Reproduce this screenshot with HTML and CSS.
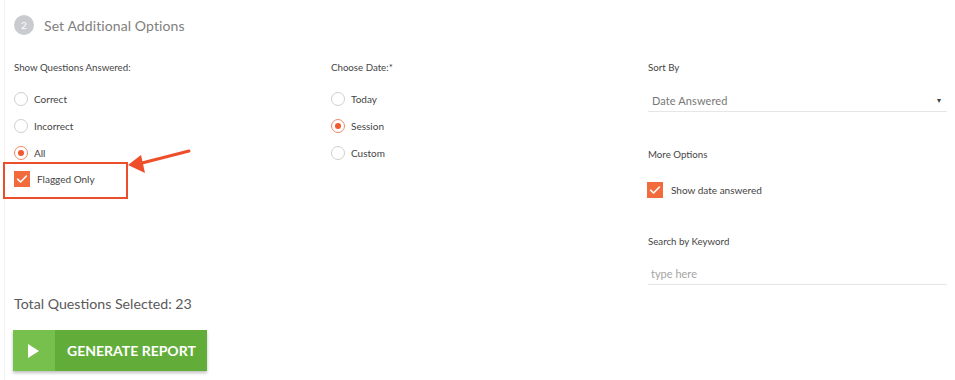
FILE: index.html
```html
<!DOCTYPE html>
<html>
<head>
<meta charset="utf-8">
<link rel="stylesheet" href="styles.css">
</head>
<body>
<div class="page">
  <div class="step">
    <span class="step-num">2</span>
    <span class="step-title">Set Additional Options</span>
  </div>

  <div class="grid">
    <div class="col">
      <div class="label">Show Questions Answered:</div>
      <div class="options">
        <div class="radio-row"><span class="radio"></span><span class="opt">Correct</span></div>
        <div class="radio-row"><span class="radio"></span><span class="opt">Incorrect</span></div>
        <div class="radio-row"><span class="radio checked"></span><span class="opt">All</span></div>
        <div class="check-row flagged">
          <span class="checkbox"><svg width="16" height="16" viewBox="0 0 16 16"><path d="M3.6 8.2 L6.6 11 L12.4 5" fill="none" stroke="#fff" stroke-width="1.6" stroke-linecap="round" stroke-linejoin="round"/></svg></span>
          <span class="opt opt-flag">Flagged Only</span>
          <span class="highlight"></span>
          <svg class="arrow" width="66" height="30" viewBox="0 0 66 30"><line x1="63" y1="4" x2="16" y2="16" stroke="#ee4e2a" stroke-width="3" stroke-linecap="round"/><polygon points="2,18 15,8 19,26" fill="#ee4e2a"/></svg>
        </div>
      </div>
    </div>

    <div class="col">
      <div class="label">Choose Date:*</div>
      <div class="options">
        <div class="radio-row"><span class="radio"></span><span class="opt opt-wide">Today</span></div>
        <div class="radio-row"><span class="radio checked"></span><span class="opt opt-wide">Session</span></div>
        <div class="radio-row"><span class="radio"></span><span class="opt opt-wide">Custom</span></div>
      </div>
    </div>

    <div class="col">
      <div class="label">Sort By</div>
      <div class="select"><span>Date Answered</span><span class="caret">&#9662;</span></div>
      <div class="label more">More Options</div>
      <div class="check-row show-date">
        <span class="checkbox"><svg width="16" height="16" viewBox="0 0 16 16"><path d="M3.6 8.2 L6.6 11 L12.4 5" fill="none" stroke="#fff" stroke-width="1.6" stroke-linecap="round" stroke-linejoin="round"/></svg></span>
        <span class="opt opt-check">Show date answered</span>
      </div>
      <div class="label search">Search by Keyword</div>
      <div class="input">type here</div>
    </div>
  </div>

  <div class="total">Total Questions Selected: 23</div>
  <div class="btn">
    <span class="btn-icon"><svg width="12" height="14" viewBox="0 0 12 14"><polygon points="0,0 11,7 0,14" fill="#fff"/></svg></span>
    <span class="btn-text">GENERATE REPORT</span>
  </div>
</div>
</body>
</html>
```

FILE: styles.css
```css
html, body {
  margin: 0;
  padding: 0;
  background: #fff;
}
body {
  font-family: Lato, "Open Sans", Arial, sans-serif;
  color: #444;
  width: 955px;
  height: 380px;
  overflow: hidden;
}
.page {
  position: relative;
  padding: 15px 8px 0 9px;
  border-left: 1px solid #f2f2f2;
  margin-left: 4px;
  height: 365px;
}
.step {
  display: flex;
  align-items: center;
  gap: 10px;
  height: 20px;
}
.step-num {
  width: 20px;
  height: 20px;
  border-radius: 50%;
  background: #c8cbcf;
  color: #fff;
  font-size: 10px;
  display: flex;
  align-items: center;
  justify-content: center;
}
.step-title {
  font-size: 14px;
  color: #808080;
  letter-spacing: 0.1px;
}
.grid {
  display: grid;
  grid-template-columns: repeat(3, 299px);
  column-gap: 18px;
  margin-top: 25px;
}
.col {
  display: flex;
  flex-direction: column;
}
.label {
  font-size: 9.7px;
  line-height: 14px;
  height: 14px;
  color: #454545;
}
.options {
  margin-top: 11px;
  display: flex;
  flex-direction: column;
}
.radio-row {
  display: flex;
  align-items: center;
  height: 27px;
}
.radio {
  box-sizing: border-box;
  width: 14px;
  height: 14px;
  border-radius: 50%;
  border: 1px solid #cfcfcf;
  display: flex;
  align-items: center;
  justify-content: center;
}
.radio.checked {
  border-color: #f08a68;
}
.radio.checked::after {
  content: "";
  width: 6px;
  height: 6px;
  border-radius: 50%;
  background: #ee5a30;
}
.opt {
  font-size: 10px;
  color: #444;
  margin-left: 6px;
}
.opt-wide {
  margin-left: 6px;
}
.check-row {
  display: flex;
  align-items: center;
  height: 16px;
}
.flagged {
  position: relative;
  margin-top: 5px;
}
.checkbox {
  width: 16px;
  height: 16px;
  background: #f26b3d;
  display: flex;
}
.opt-flag {
  margin-left: 7px;
}
.opt-check {
  margin-left: 8px;
}
.highlight {
  position: absolute;
  left: -11px;
  top: -9px;
  box-sizing: border-box;
  width: 125px;
  height: 37px;
  border: 2.5px solid #ea4e2b;
}
.arrow {
  position: absolute;
  left: 112px;
  top: -24px;
}
.select {
  margin-top: 15px;
  height: 22px;
  border-bottom: 1px solid #e6e6e6;
  display: flex;
  align-items: center;
  justify-content: space-between;
  padding: 0 6px 0 4px;
  font-size: 11px;
  color: #777;
  letter-spacing: 0.1px;
}
.caret {
  font-size: 8px;
  color: #444;
}
.more {
  margin-top: 35px;
}
.show-date {
  margin-top: 21px;
  margin-left: -1px;
}
.search {
  margin-top: 36px;
}
.input {
  margin-top: 15px;
  height: 21px;
  border-bottom: 1px solid #e6e6e6;
  font-size: 11px;
  color: #a5a5a5;
  display: flex;
  align-items: center;
  padding-left: 3px;
}
.total {
  margin-top: 10px;
  font-size: 14.2px;
  line-height: 18px;
  color: #5a5a5a;
}
.btn {
  margin-top: 17px;
  margin-left: -1px;
  display: flex;
  width: 194px;
  height: 41px;
  box-shadow: 0 2px 3px rgba(0,0,0,0.25);
}
.btn-icon {
  width: 42px;
  background: #78c04e;
  display: flex;
  align-items: center;
  justify-content: center;
}
.btn-text {
  flex: 1;
  background: #62ad39;
  color: #fff;
  font-weight: bold;
  font-size: 14px;
  display: flex;
  align-items: center;
  padding-left: 12px;
}
```
